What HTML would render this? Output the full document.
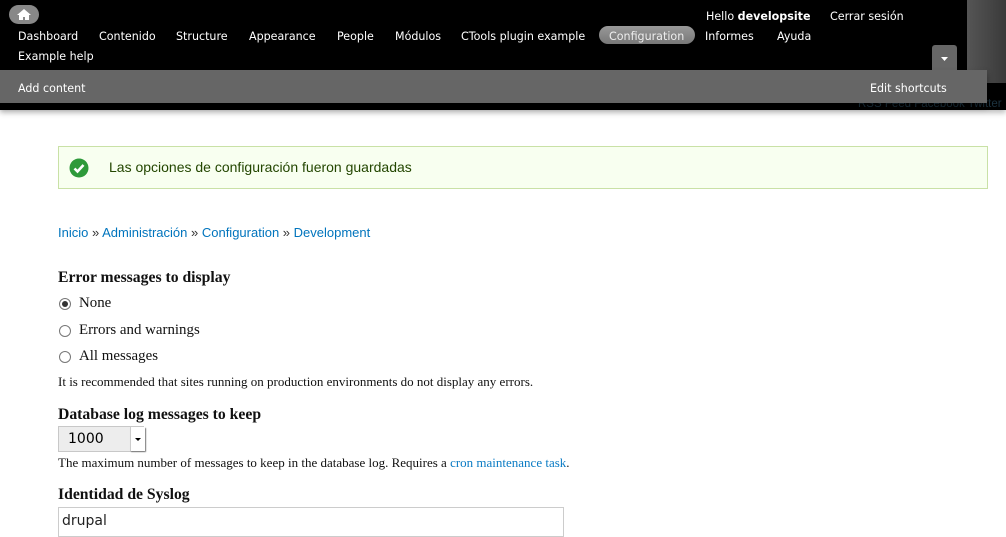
<!DOCTYPE html>
<html><head><meta charset="utf-8"><style>
body{margin:0;width:1006px;height:529px;overflow:hidden;background:#fff;position:relative;font-family:"DejaVu Sans","Liberation Sans",sans-serif}
.a{position:absolute;white-space:nowrap}
#tb{left:0;top:0;width:967px;height:70px;background:#000}
#rs{left:967px;top:0;width:39px;height:83px;background:linear-gradient(90deg,#555,#3a3a3a)}
#hb{left:0;top:83px;width:1006px;height:27px;background:#000;box-shadow:0 3px 5px rgba(0,0,0,.25)}
#sc{left:0;top:70px;width:987px;height:33px;background:#666;box-shadow:0 4px 6px rgba(0,0,0,.35)}
.m{color:#fff;font-size:11.1px;top:30px}
.f{font-family:"Liberation Serif",serif;color:#111}
h3{margin:0;font-size:15.7px;font-weight:bold}
.r{width:10px;height:10px;border:1px solid #777;border-radius:50%;left:59px;background:#fff}
.l{font-size:14.9px}
a{color:#0074bd;text-decoration:none}
</style></head><body>
<div class="a" id="hb"><span class="a" style="left:858px;top:15px;font-size:11.5px;color:#1d3340;font-family:'Liberation Sans',sans-serif">RSS Feed Facebook Twitter</span></div>
<div class="a" id="rs"></div>
<div class="a" id="tb">
 <div class="a" style="left:9px;top:5px;width:30px;height:19px;border-radius:10px;background:#888"><svg class="a" style="left:8px;top:4px" width="14" height="11" viewBox="0 0 14 11"><path d="M7 0L0 6h2v5h4V8h2v3h4V6h2z" fill="#fff"/></svg></div>
 <span class="a m" style="left:18px">Dashboard</span>
 <span class="a m" style="left:99px">Contenido</span>
 <span class="a m" style="left:176px">Structure</span>
 <span class="a m" style="left:249px">Appearance</span>
 <span class="a m" style="left:337px">People</span>
 <span class="a m" style="left:395px">Módulos</span>
 <span class="a m" style="left:461px">CTools plugin example</span>
 <span class="a" style="left:599px;top:26px;width:96px;height:18px;border-radius:9px;background:linear-gradient(#999,#777)"></span>
 <span class="a m" style="left:609px;color:#eee">Configuration</span>
 <span class="a m" style="left:705px">Informes</span>
 <span class="a m" style="left:777px">Ayuda</span>
 <span class="a m" style="left:18px;top:50px">Example help</span>
 <span class="a m" style="left:706px;top:10px">Hello <b>developsite</b></span>
 <span class="a m" style="left:830px;top:10px">Cerrar sesión</span>
 <div class="a" style="left:932px;top:45px;width:25px;height:25px;background:#666;border-radius:3px 3px 0 0"><svg class="a" style="left:9px;top:12px" width="7" height="4"><path d="M0 0h7L3.5 4z" fill="#fff"/></svg></div>
</div>
<div class="a" id="sc">
 <span class="a" style="left:18px;top:12px;color:#fff;font-size:11.1px">Add content</span>
 <span class="a" style="left:870px;top:12px;color:#fff;font-size:11.1px">Edit shortcuts</span>
</div>
<div class="a" style="left:58px;top:146px;width:928px;height:41px;background:#f8fff0;border:1px solid #c9e1a6"></div>
<svg class="a" style="left:69px;top:158px" width="20" height="20" viewBox="0 0 20 20"><circle cx="10" cy="10" r="9.5" fill="#2e9a3a"/><path d="M5.5 10.5l3 3 6-6.5" stroke="#fff" stroke-width="2.6" fill="none"/></svg>
<span class="a" style="left:109px;top:159px;font-size:14px;color:#234600;font-family:'Liberation Sans',sans-serif">Las opciones de configuración fueron guardadas</span>
<span class="a" style="left:58px;top:225px;font-size:13px;font-family:'Liberation Sans',sans-serif;color:#333"><a>Inicio</a> » <a>Administración</a> » <a>Configuration</a> » <a>Development</a></span>
<div class="a f" style="left:58px;top:269px"><h3>Error messages to display</h3></div>
<div class="a r" style="top:298px"><div class="a" style="left:2px;top:2px;width:6px;height:6px;border-radius:50%;background:#333"></div></div>
<span class="a f l" style="left:79px;top:295px">None</span>
<div class="a r" style="top:325px"></div>
<span class="a f l" style="left:79px;top:322px">Errors and warnings</span>
<div class="a r" style="top:351px"></div>
<span class="a f l" style="left:79px;top:348px">All messages</span>
<span class="a f" style="left:58px;top:374px;font-size:13px">It is recommended that sites running on production environments do not display any errors.</span>
<div class="a f" style="left:58px;top:406px"><h3>Database log messages to keep</h3></div>
<div class="a" style="left:58px;top:426px;width:86px;height:26px;background:#ededed;border:1px solid #c8c8c8;box-sizing:border-box"></div>
<div class="a" style="left:130px;top:427px;width:14px;height:24px;background:#fff;border-left:1px solid #ccc;box-shadow:1px 1px 1px #777"><svg class="a" style="left:4px;top:11px" width="6" height="3"><path d="M0 0h6L3 3z" fill="#000"/></svg></div>
<span class="a" style="left:68px;top:431px;font-size:14px">1000</span>
<span class="a f" style="left:58px;top:455px;font-size:13px">The maximum number of messages to keep in the database log. Requires a <a style="color:#0a7bc4">cron maintenance task</a>.</span>
<div class="a f" style="left:58px;top:486px"><h3>Identidad de Syslog</h3></div>
<div class="a" style="left:58px;top:507px;width:506px;height:30px;border:1px solid #ccc;box-sizing:border-box"></div>
<span class="a" style="left:62px;top:513px;font-size:14px;color:#222">drupal</span>
</body></html>
